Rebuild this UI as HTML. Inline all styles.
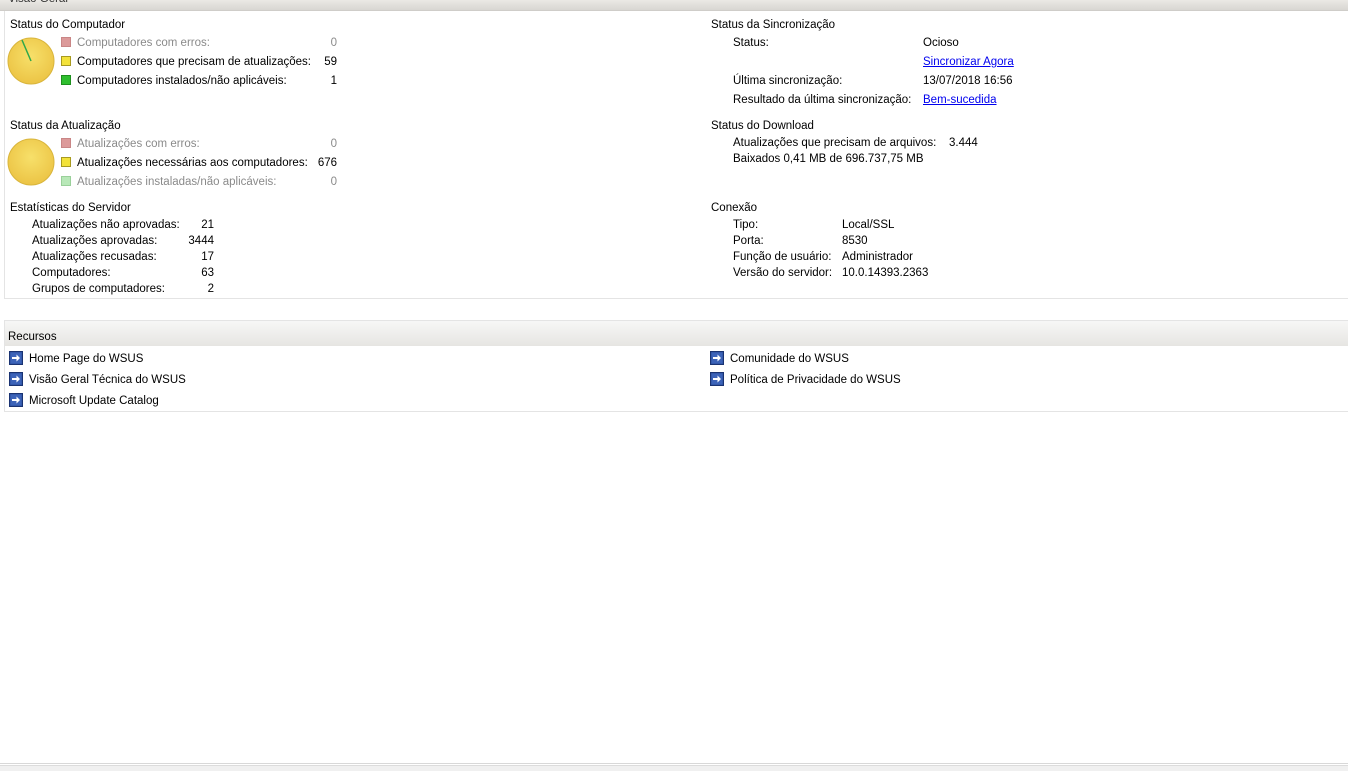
<!DOCTYPE html>
<html><head><meta charset="utf-8">
<style>
html,body{margin:0;padding:0;background:#fff;width:1348px;height:771px;overflow:hidden;position:relative;font-family:"Liberation Sans",Arial,sans-serif;font-size:11.5px;color:#000}
.t{position:absolute;white-space:nowrap;line-height:16px}
.r{text-align:right}
.g{color:#8a8a8a}
a{color:#0000ee;text-decoration:underline}
.hdr{position:absolute;left:0;width:1348px;background:linear-gradient(#ebe9e5,#d8d6d2);}
.sq{position:absolute;width:10px;height:10px;box-sizing:border-box}
.ic{position:absolute;width:14px;height:14px}
</style></head><body>
<div class="hdr" style="top:0;height:10px;border-bottom:1px solid #cfcdc9"></div>
<div class="t" style="left:8px;top:-9px;color:#333">Visão Geral</div>
<div style="position:absolute;left:4px;top:11px;width:1344px;height:288px;border-left:1px solid #e4e4e4;border-bottom:1px solid #e4e4e4;box-sizing:border-box"></div>

<div class="t" style="left:10px;top:17px">Status do Computador</div>
<svg style="position:absolute;left:7px;top:37px" width="48" height="48" viewBox="0 0 48 48">
<defs><radialGradient id="pg" cx="50%" cy="40%" r="60%"><stop offset="0" stop-color="#f7e06a"/><stop offset="1" stop-color="#ecc445"/></radialGradient></defs>
<circle cx="24" cy="24" r="23" fill="url(#pg)" stroke="#d9b53c" stroke-width="1"/>
<line x1="24" y1="24" x2="15" y2="3" stroke="#2ea84a" stroke-width="1.5"/></svg>
<div class="sq" style="left:61px;top:37px;background:#dc9a9a;border:1px solid #c98686"></div>
<div class="t g" style="left:77px;top:35px">Computadores com erros:</div>
<div class="t g r" style="left:300px;width:37px;top:35px">0</div>
<div class="sq" style="left:61px;top:56px;background:#f3e23a;border:1px solid #a89a20"></div>
<div class="t" style="left:77px;top:54px">Computadores que precisam de atualizações:</div>
<div class="t r" style="left:300px;width:37px;top:54px">59</div>
<div class="sq" style="left:61px;top:75px;background:#2fbf2f;border:1px solid #1e8f1e"></div>
<div class="t" style="left:77px;top:73px">Computadores instalados/não aplicáveis:</div>
<div class="t r" style="left:300px;width:37px;top:73px">1</div>

<div class="t" style="left:10px;top:118px">Status da Atualização</div>
<svg style="position:absolute;left:7px;top:138px" width="48" height="48" viewBox="0 0 48 48">
<circle cx="24" cy="24" r="23" fill="url(#pg)" stroke="#d9b53c" stroke-width="1"/></svg>
<div class="sq" style="left:61px;top:138px;background:#dc9a9a;border:1px solid #c98686"></div>
<div class="t g" style="left:77px;top:136px">Atualizações com erros:</div>
<div class="t g r" style="left:300px;width:37px;top:136px">0</div>
<div class="sq" style="left:61px;top:157px;background:#f3e23a;border:1px solid #a89a20"></div>
<div class="t" style="left:77px;top:155px">Atualizações necessárias aos computadores:</div>
<div class="t r" style="left:300px;width:37px;top:155px">676</div>
<div class="sq" style="left:61px;top:176px;background:#b8e8b8;border:1px solid #9ad09a"></div>
<div class="t g" style="left:77px;top:174px">Atualizações instaladas/não aplicáveis:</div>
<div class="t g r" style="left:300px;width:37px;top:174px">0</div>

<div class="t" style="left:10px;top:200px">Estatísticas do Servidor</div>
<div class="t" style="left:32px;top:217px">Atualizações não aprovadas:</div><div class="t r" style="left:180px;width:34px;top:217px">21</div>
<div class="t" style="left:32px;top:233px">Atualizações aprovadas:</div><div class="t r" style="left:180px;width:34px;top:233px">3444</div>
<div class="t" style="left:32px;top:249px">Atualizações recusadas:</div><div class="t r" style="left:180px;width:34px;top:249px">17</div>
<div class="t" style="left:32px;top:265px">Computadores:</div><div class="t r" style="left:180px;width:34px;top:265px">63</div>
<div class="t" style="left:32px;top:281px">Grupos de computadores:</div><div class="t r" style="left:180px;width:34px;top:281px">2</div>

<div class="t" style="left:711px;top:17px">Status da Sincronização</div>
<div class="t" style="left:733px;top:35px">Status:</div><div class="t" style="left:923px;top:35px">Ocioso</div>
<div class="t" style="left:923px;top:54px"><a>Sincronizar Agora</a></div>
<div class="t" style="left:733px;top:73px">Última sincronização:</div><div class="t" style="left:923px;top:73px">13/07/2018 16:56</div>
<div class="t" style="left:733px;top:92px">Resultado da última sincronização:</div><div class="t" style="left:923px;top:92px"><a>Bem-sucedida</a></div>

<div class="t" style="left:711px;top:118px">Status do Download</div>
<div class="t" style="left:733px;top:135px">Atualizações que precisam de arquivos:</div><div class="t" style="left:949px;top:135px">3.444</div>
<div class="t" style="left:733px;top:151px">Baixados 0,41 MB de 696.737,75 MB</div>

<div class="t" style="left:711px;top:200px">Conexão</div>
<div class="t" style="left:733px;top:217px">Tipo:</div><div class="t" style="left:842px;top:217px">Local/SSL</div>
<div class="t" style="left:733px;top:233px">Porta:</div><div class="t" style="left:842px;top:233px">8530</div>
<div class="t" style="left:733px;top:249px">Função de usuário:</div><div class="t" style="left:842px;top:249px">Administrador</div>
<div class="t" style="left:733px;top:265px">Versão do servidor:</div><div class="t" style="left:842px;top:265px">10.0.14393.2363</div>

<div style="position:absolute;left:4px;top:320px;width:1344px;height:92px;border-left:1px solid #e4e4e4;border-bottom:1px solid #e4e4e4;border-top:1px solid #e4e4e4;box-sizing:border-box"></div>
<div class="hdr" style="top:321px;left:5px;width:1343px;height:25px;background:linear-gradient(#f7f7f6,#e6e5e2)"></div>
<div class="t" style="left:8px;top:329px">Recursos</div>

<svg width="0" height="0" style="position:absolute"><defs><symbol id="ar" viewBox="0 0 14 14"><rect x="0.5" y="0.5" width="13" height="13" fill="#2b4f9e" stroke="#1a3372"/><rect x="1.5" y="1.5" width="11" height="11" fill="#3c63b8"/><path d="M3 6h4.5V3.5L11 7l-3.5 3.5V8H3z" fill="#fff"/></symbol></defs></svg>
<svg class="ic" style="left:9px;top:351px"><use href="#ar"/></svg><div class="t" style="left:29px;top:351px">Home Page do WSUS</div>
<svg class="ic" style="left:9px;top:372px"><use href="#ar"/></svg><div class="t" style="left:29px;top:372px">Visão Geral Técnica do WSUS</div>
<svg class="ic" style="left:9px;top:393px"><use href="#ar"/></svg><div class="t" style="left:29px;top:393px">Microsoft Update Catalog</div>
<svg class="ic" style="left:710px;top:351px"><use href="#ar"/></svg><div class="t" style="left:730px;top:351px">Comunidade do WSUS</div>
<svg class="ic" style="left:710px;top:372px"><use href="#ar"/></svg><div class="t" style="left:730px;top:372px">Política de Privacidade do WSUS</div>

<div style="position:absolute;left:0;top:763px;width:1348px;height:1px;background:#d8d8d8"></div>
<div style="position:absolute;left:0;top:765px;width:1348px;height:6px;background:#f0f0f0;border-top:1px solid #dcdcdc"></div>
</body></html>
